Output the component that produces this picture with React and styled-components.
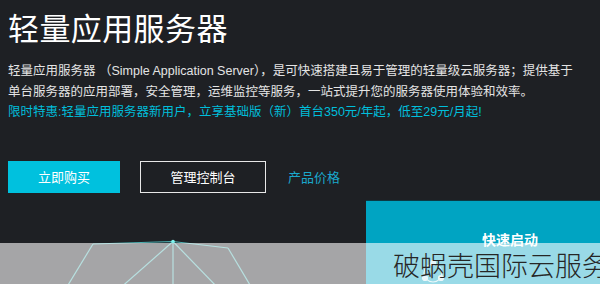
import styled, { createGlobalStyle } from "styled-components";

const GlobalStyle = createGlobalStyle`
  html, body {
    margin: 0;
    padding: 0;
    background: #1e2024;
  }
  body {
    font-family: "Liberation Sans", "Noto Sans CJK SC", sans-serif;
  }
`;

const Page = styled.div`
  position: relative;
  width: 600px;
  height: 284px;
  overflow: hidden;
  background: #1e2024;
  color: #fff;
`;

const Hero = styled.section`
  padding: 6px 8px 0;
`;

const Title = styled.h1`
  margin: 0;
  font-family: "Noto Sans CJK SC", sans-serif;
  font-size: 31px;
  font-weight: 400;
  line-height: 42px;
  letter-spacing: 0.4px;
`;

const Desc = styled.p`
  margin: 13px 0 0;
  width: 566px;
  font-size: 12.5px;
  line-height: 20.5px;
  color: #e4e4e4;
`;

const Promo = styled.p`
  margin: 0;
  font-size: 12.5px;
  line-height: 20.5px;
  color: #00bedb;
`;

const Actions = styled.div`
  display: flex;
  align-items: center;
  gap: 20px;
  margin-top: 38px;
`;

const Button = styled.button`
  box-sizing: border-box;
  height: 32px;
  width: ${({ $w }) => $w}px;
  font-family: "Noto Sans CJK SC", sans-serif;
  font-size: 13px;
  color: #fff;
  border: 1px solid ${({ $primary }) => ($primary ? "#00c1de" : "#e8e8e8")};
  background: ${({ $primary }) => ($primary ? "#00c1de" : "transparent")};
  border-radius: 0;
  padding: 0;
`;

const Link = styled.a`
  font-family: "Noto Sans CJK SC", sans-serif;
  font-size: 13px;
  color: #1aa8cc;
  margin-left: 2px;
`;

const Lower = styled.div`
  display: flex;
  margin-top: 7px;
  height: 90px;
`;

const Deco = styled.div`
  width: 366px;
  flex-shrink: 0;
  svg {
    display: block;
  }
`;

const QuickCard = styled.div`
  flex: 1;
  background: #00a4c2;
  border-top: 1px solid #0b3a44;
  padding-top: 29px;
  padding-left: 54px;
  text-align: center;
`;

const CardTitle = styled.div`
  font-family: "Noto Sans CJK SC", sans-serif;
  font-size: 14px;
  font-weight: 700;
  line-height: 18px;
  color: #fff;
`;

const CardIcon = styled.div`
  display: flex;
  margin-top: 9px;
  opacity: 0.8;
`;

const Watermark = styled.div`
  position: absolute;
  left: 0;
  right: 0;
  bottom: 0;
  height: 41px;
  background: rgba(255, 255, 255, 0.6);
  padding-left: 393px;
  box-sizing: border-box;
  font-family: "Noto Sans CJK SC", sans-serif;
  font-weight: 300;
  font-size: 27px;
  line-height: 44px;
  color: #262626;
  white-space: nowrap;
`;

export default function App() {
  return (
    <Page>
      <GlobalStyle />
      <Hero>
        <Title>轻量应用服务器</Title>
        <Desc>
          轻量应用服务器 （Simple Application
          Server），是可快速搭建且易于管理的轻量级云服务器；提供基于单台服务器的应用部署，安全管理，运维监控等服务，一站式提升您的服务器使用体验和效率。
        </Desc>
        <Promo>
          限时特惠:轻量应用服务器新用户，立享基础版（新）首台350元/年起，低至29元/月起!
        </Promo>
        <Actions>
          <Button $primary $w={112}>立即购买</Button>
          <Button $w={126}>管理控制台</Button>
          <Link>产品价格</Link>
        </Actions>
      </Hero>
      <Lower>
        <Deco>
          <svg width="366" height="90" viewBox="0 0 366 90">
            <g stroke="#5ad6d6" strokeWidth="1.2" fill="none" opacity="0.8">
              <polyline points="93,44 173,41.5 228,48" />
              <line x1="93" y1="44" x2="65" y2="90" />
              <line x1="173" y1="41.5" x2="118" y2="90" />
              <line x1="173" y1="41.5" x2="173" y2="90" />
              <line x1="173" y1="41.5" x2="220" y2="90" />
              <line x1="228" y1="48" x2="253" y2="90" />
            </g>
            <circle cx="173" cy="41.5" r="1.8" fill="#7ef0ea" />
          </svg>
        </Deco>
        <QuickCard>
          <CardTitle>快速启动</CardTitle>
          <CardIcon>
            <svg width="26" height="30" viewBox="0 0 26 30">
              <g stroke="#fff" strokeWidth="1.2" fill="none">
                <circle cx="13" cy="16" r="9" />
                <circle cx="13" cy="6" r="2.5" fill="#fff" />
                <circle cx="5" cy="21" r="2.5" fill="#fff" />
                <circle cx="21" cy="21" r="2.5" fill="#fff" />
              </g>
            </svg>
          </CardIcon>
        </QuickCard>
      </Lower>
      <Watermark>破蜗壳国际云服务器</Watermark>
    </Page>
  );
}
